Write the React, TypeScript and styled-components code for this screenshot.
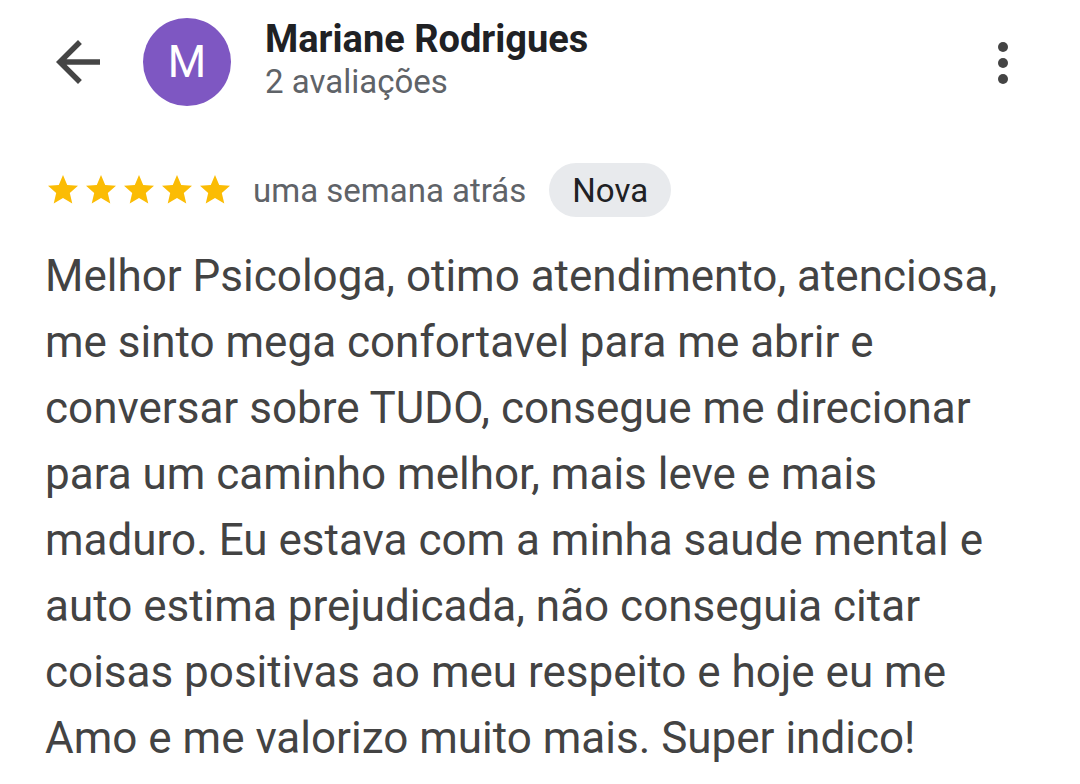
import styled, { createGlobalStyle } from "styled-components";

const Global = createGlobalStyle`
  html, body {
    margin: 0;
    padding: 0;
    background: #fff;
  }
  body {
    font-family: Roboto, "Noto Sans", Arial, sans-serif;
  }
`;

const Page = styled.div`
  width: 1080px;
  height: 784px;
  overflow: hidden;
  background: #fff;
  box-sizing: border-box;
  padding: 18px 0 0 45px;
`;

const Header = styled.div`
  display: flex;
  align-items: center;
  padding-right: 72px;
`;

const BackButton = styled.div`
  width: 66px;
  height: 66px;
  display: flex;
  align-items: center;
  justify-content: center;
  margin-right: 32px;
  color: #454545;
`;

const Avatar = styled.div`
  width: 88px;
  height: 88px;
  border-radius: 50%;
  background: #7e57c2;
  color: #fff;
  display: flex;
  align-items: center;
  justify-content: center;
  font-size: 44px;
  flex-shrink: 0;
`;

const Who = styled.div`
  display: flex;
  flex-direction: column;
  margin-left: 34px;
  flex: 1;
  margin-top: -4px;
`;

const Name = styled.div`
  font-size: 38px;
  font-weight: 700;
  color: #202124;
  line-height: 44px;
`;

const Count = styled.div`
  font-size: 33px;
  color: #5f6368;
  line-height: 42px;
`;

const Dots = styled.div`
  display: flex;
  flex-direction: column;
  gap: 6px;
  margin-top: 2px;
`;

const Dot = styled.span`
  width: 10px;
  height: 10px;
  border-radius: 50%;
  background: #444;
`;

const Meta = styled.div`
  display: flex;
  align-items: center;
  margin-top: 57px;
`;

const Stars = styled.div`
  display: flex;
  gap: 2px;
  margin-right: 20px;
`;

const When = styled.span`
  font-size: 33px;
  color: #5f6368;
`;

const Chip = styled.span`
  margin-left: 23px;
  height: 54px;
  padding: 0 23px;
  border-radius: 27px;
  background: #e8eaed;
  color: #202124;
  font-size: 33px;
  display: inline-flex;
  align-items: center;
`;

const Body = styled.p`
  margin: 26px 0 0;
  font-size: 44px;
  line-height: 66px;
  color: #434343;
  width: 1030px;
  white-space: nowrap;
`;

const Star = () => (
  <svg width="36" height="36" viewBox="0 0 24 24">
    <path
      fill="#fbbc04"
      d="M12 17.27 18.18 21l-1.64-7.03L22 9.24l-7.19-.61L12 2 9.19 8.63 2 9.24l5.46 4.73L5.82 21z"
    />
  </svg>
);

const lines = [
  "Melhor Psicologa, otimo atendimento, atenciosa,",
  "me sinto mega confortavel para me abrir e",
  "conversar sobre TUDO, consegue me direcionar",
  "para um caminho melhor, mais leve e mais",
  "maduro. Eu estava com a minha saude mental e",
  "auto estima prejudicada, não conseguia citar",
  "coisas positivas ao meu respeito e hoje eu me",
  "Amo e me valorizo muito mais. Super indico!",
];

export default function App() {
  return (
    <>
      <Global />
      <Page>
        <Header>
          <BackButton>
            <svg width="66" height="66" viewBox="0 0 24 24">
              <path
                fill="currentColor"
                d="M20 11H7.83l5.59-5.59L12 4l-8 8 8 8 1.41-1.41L7.83 13H20v-2z"
              />
            </svg>
          </BackButton>
          <Avatar>M</Avatar>
          <Who>
            <Name>Mariane Rodrigues</Name>
            <Count>2 avaliações</Count>
          </Who>
          <Dots>
            <Dot />
            <Dot />
            <Dot />
          </Dots>
        </Header>
        <Meta>
          <Stars>
            {[0, 1, 2, 3, 4].map((i) => (
              <Star key={i} />
            ))}
          </Stars>
          <When>uma semana atrás</When>
          <Chip>Nova</Chip>
        </Meta>
        <Body>
          {lines.map((l, i) => (
            <span key={i}>
              {l}
              <br />
            </span>
          ))}
        </Body>
      </Page>
    </>
  );
}
